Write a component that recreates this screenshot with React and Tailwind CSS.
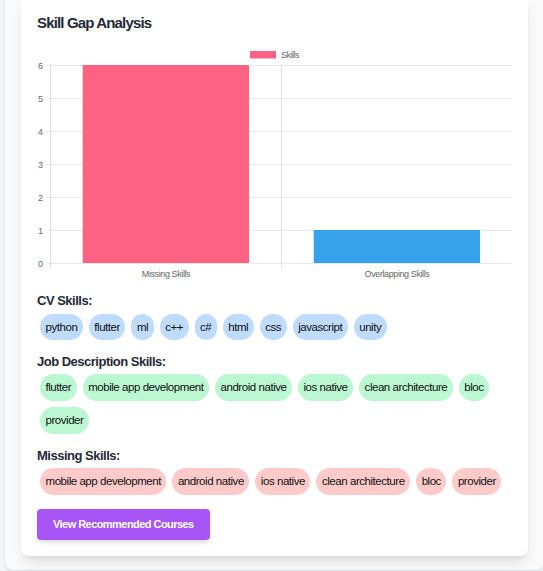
import React from "react";

const cvSkills = ["python", "flutter", "ml", "c++", "c#", "html", "css", "javascript", "unity"];
const jobSkills = ["flutter", "mobile app development", "android native", "ios native", "clean architecture", "bloc", "provider"];
const missingSkills = ["mobile app development", "android native", "ios native", "clean architecture", "bloc", "provider"];

function Chip({ label, tone }) {
  const bg = tone === "blue" ? "bg-[#bfdbfe]" : tone === "green" ? "bg-[#bbf7d0]" : "bg-[#fecaca]";
  return (
    <span className={`${bg} rounded-full px-[5.5px] py-[5px] text-[11.5px] leading-[16.5px] tracking-[-0.45px] text-[#111]`}>
      {label}
    </span>
  );
}

function Section({ title, items, tone, className }) {
  return (
    <div className={className}>
      <h3 className="mb-[2.5px] text-[13px] font-bold leading-[20px] tracking-[-0.5px] text-[#1f2937]">{title}</h3>
      <div className="flex flex-wrap gap-x-[6px] gap-y-[6.5px] pl-[3px]">
        {items.map((s) => (
          <Chip key={s} label={s} tone={tone} />
        ))}
      </div>
    </div>
  );
}

function Chart() {
  const gridYs = [25.5, 58.5, 91.5, 124.5, 157.5, 190.5, 223.5];
  const labels = ["6", "5", "4", "3", "2", "1", "0"];
  return (
    <svg width="476" height="245" className="block" fontFamily="'Liberation Sans',Arial,sans-serif">
      <rect x="213" y="11" width="26" height="7.5" fill="#FF6384" />
      <text x="244" y="18" fontSize="9" fill="#666" letterSpacing="-0.5">Skills</text>
      {gridYs.map((y, i) => (
        <g key={y}>
          <line x1="10" x2="475" y1={y} y2={y} stroke="#e8e8e8" strokeWidth="1" />
          <text x="6" y={y + 3} fontSize="9" fill="#666" textAnchor="end">
            {labels[i]}
          </text>
        </g>
      ))}
      <line x1="13.5" x2="13.5" y1="25" y2="228" stroke="#dcdcdc" strokeWidth="1" />
      <line x1="244.5" x2="244.5" y1="25" y2="228" stroke="#e0e0e0" strokeWidth="1" />
      <rect x="45.7" y="25" width="166.3" height="198" fill="#FF6384" />
      <rect x="276.7" y="190" width="166.3" height="33" fill="#36A2EB" />
      <text x="129" y="237" fontSize="9" fill="#666" textAnchor="middle" letterSpacing="-0.4">Missing Skills</text>
      <text x="360" y="237" fontSize="9" fill="#666" textAnchor="middle" letterSpacing="-0.4">Overlapping Skills</text>
    </svg>
  );
}

export default function App() {
  return (
    <div className="h-[571px] w-[543px] overflow-hidden bg-[#f3f4f6] font-['Liberation_Sans',Arial,sans-serif]">
      <div className="-mt-[21px] ml-[5px] w-[539px] rounded-lg bg-[#fafafa] px-4 pb-[14px] pt-4 shadow-sm">
        <div className="rounded-lg bg-white p-4 pb-[16.5px] shadow-lg">
          <h2 className="mb-[5px] text-[15px] font-bold leading-[24px] tracking-[-0.85px] text-[#1f2937]">Skill Gap Analysis</h2>
          <Chart />
          <Section className="mt-[6px]" title="CV Skills:" items={cvSkills} tone="blue" />
          <Section className="mt-[11.5px]" title="Job Description Skills:" items={jobSkills} tone="green" />
          <Section className="mt-[12px]" title="Missing Skills:" items={missingSkills} tone="red" />
          <button className="mt-[14px] rounded bg-[#a855f7] px-4 py-2 text-[11px] font-bold leading-[15px] tracking-[-0.55px] text-white shadow-md">
            View Recommended Courses
          </button>
        </div>
      </div>
    </div>
  );
}
